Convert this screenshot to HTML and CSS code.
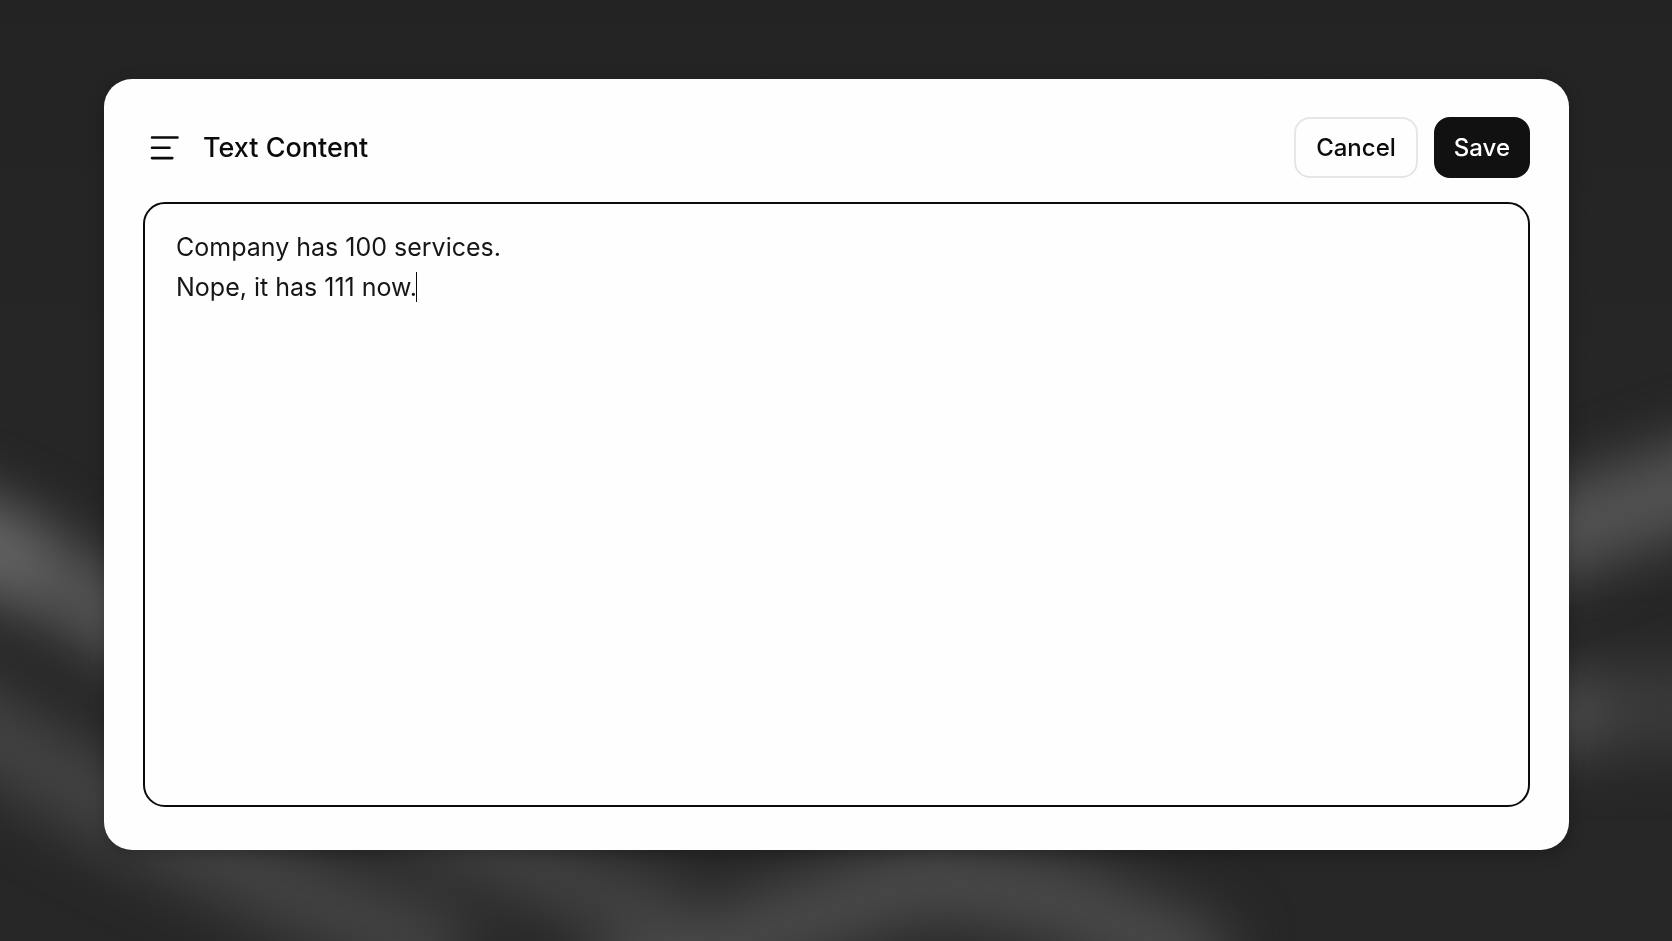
FILE: index.html
```html
<!DOCTYPE html>
<html lang="en">
<head>
<meta charset="utf-8">
<meta name="viewport" content="width=device-width, initial-scale=1">
<title>Text Content</title>
<link rel="stylesheet" href="styles.css">
</head>
<body class="page">
<svg class="backdrop" viewBox="0 0 1672 941" preserveAspectRatio="none" aria-hidden="true">
  <defs>
    <linearGradient id="base" x1="0" y1="0" x2="0" y2="1">
      <stop offset="0" stop-color="#232323"/>
      <stop offset="0.4" stop-color="#262626"/>
      <stop offset="1" stop-color="#272727"/>
    </linearGradient>
    <filter id="soft" color-interpolation-filters="sRGB" filterUnits="userSpaceOnUse" x="-300" y="200" width="2300" height="1000"><feGaussianBlur stdDeviation="28"/></filter>
    <filter id="softer" color-interpolation-filters="sRGB" filterUnits="userSpaceOnUse" x="-300" y="200" width="2300" height="1000"><feGaussianBlur stdDeviation="30"/></filter>
  </defs>
  <rect width="1672" height="941" fill="url(#base)"/>
  <g fill="none" filter="url(#soft)">
    <path d="M-160 480 L0 552 L40 575" stroke="#646464" stroke-width="90"/>
    <path d="M40 575 L110 612 L260 710" stroke="#535353" stroke-width="84"/>
    <path d="M1860 430 L1672 492 L1560 532 L1400 600" stroke="#535353" stroke-width="90"/>
  </g>
  <g fill="none" filter="url(#softer)">
    <path d="M-160 640 L0 740 L100 800 L300 895 L460 960" stroke="#434343" stroke-width="84"/>
    <path d="M400 800 L560 880 L680 920" stroke="#434343" stroke-width="70"/>
    <path d="M600 1000 L780 925 L930 878 L1060 900 L1220 970" stroke="#4c4c4c" stroke-width="76"/>
    <path d="M1440 735 L1570 714 L1620 710" stroke="#505050" stroke-width="70"/>
    <path d="M1600 710 L1900 700" stroke="#3b3b3b" stroke-width="84"/>
  </g>
</svg>
<main class="stage">
  <form class="card">
    <header class="head">
      <svg class="icon" viewBox="0 0 32 32" aria-hidden="true"><path d="M4 5.5h25.5M4 15.8h17.5M4 26.1h20.3"/></svg>
      <h1 class="title"><label for="content">Text Content</label></h1>
      <div class="actions">
        <button class="btn" type="button">Cancel</button>
        <button class="btn btn-primary" type="submit">Save</button>
      </div>
    </header>
    <div class="field">
      <textarea class="input" id="content" spellcheck="false">Company has 100 services.
Nope, it has 111 now.</textarea>
      <span class="caret" aria-hidden="true"></span>
    </div>
  </form>
</main>
</body>
</html>
```
FILE: styles.css
```css
* { box-sizing: border-box; }
.page {
  margin: 0;
  min-height: 100vh;
  background: #242424;
  color: #0b0b0b;
  font-family: Inter, "Liberation Sans", sans-serif;
  overflow: hidden;
}
.backdrop { position: fixed; inset: 0; width: 100%; height: 100%; }
.stage {
  position: relative;
  display: flex;
  min-height: 100vh;
  padding: 79px 103px 91px 104px;
}
.card {
  flex: 1;
  display: flex;
  flex-direction: column;
  gap: 24px;
  padding: 38px 39px 43px;
  border-radius: 28px;
  background: #fefefe;
  box-shadow: 0 4px 16px rgba(0, 0, 0, 0.25);
}
.head { display: flex; align-items: center; gap: 23px; padding-left: 5px; }
.icon { width: 32px; height: 32px; fill: none; stroke: #0b0b0b; stroke-width: 2.6; stroke-linecap: round; }
.title { flex: 1; margin: 0; font-size: 27px; line-height: 32px; font-weight: 500; }
.actions { display: flex; gap: 16px; }
.btn {
  height: 61px;
  padding: 0 20px;
  border: 2px solid #e6e6e6;
  border-radius: 16px;
  background: #fefefe;
  color: #0b0b0b;
  font: 500 24px/32px Inter, "Liberation Sans", sans-serif;
}
.btn-primary { padding: 0 18px; border-color: #111; background: #111; color: #fff; }
.field { position: relative; flex: 1; display: flex; }
.input {
  flex: 1;
  padding: 23px 31px;
  border: 2px solid #0b0b0b;
  border-radius: 22px;
  outline: 0;
  background: #fefefe;
  color: #161616;
  caret-color: transparent;
  resize: none;
  font: 400 25px/40px Inter, "Liberation Sans", sans-serif;
}
.caret { position: absolute; left: 273px; top: 70px; width: 1px; height: 30px; background: #0b0b0b; }
```
